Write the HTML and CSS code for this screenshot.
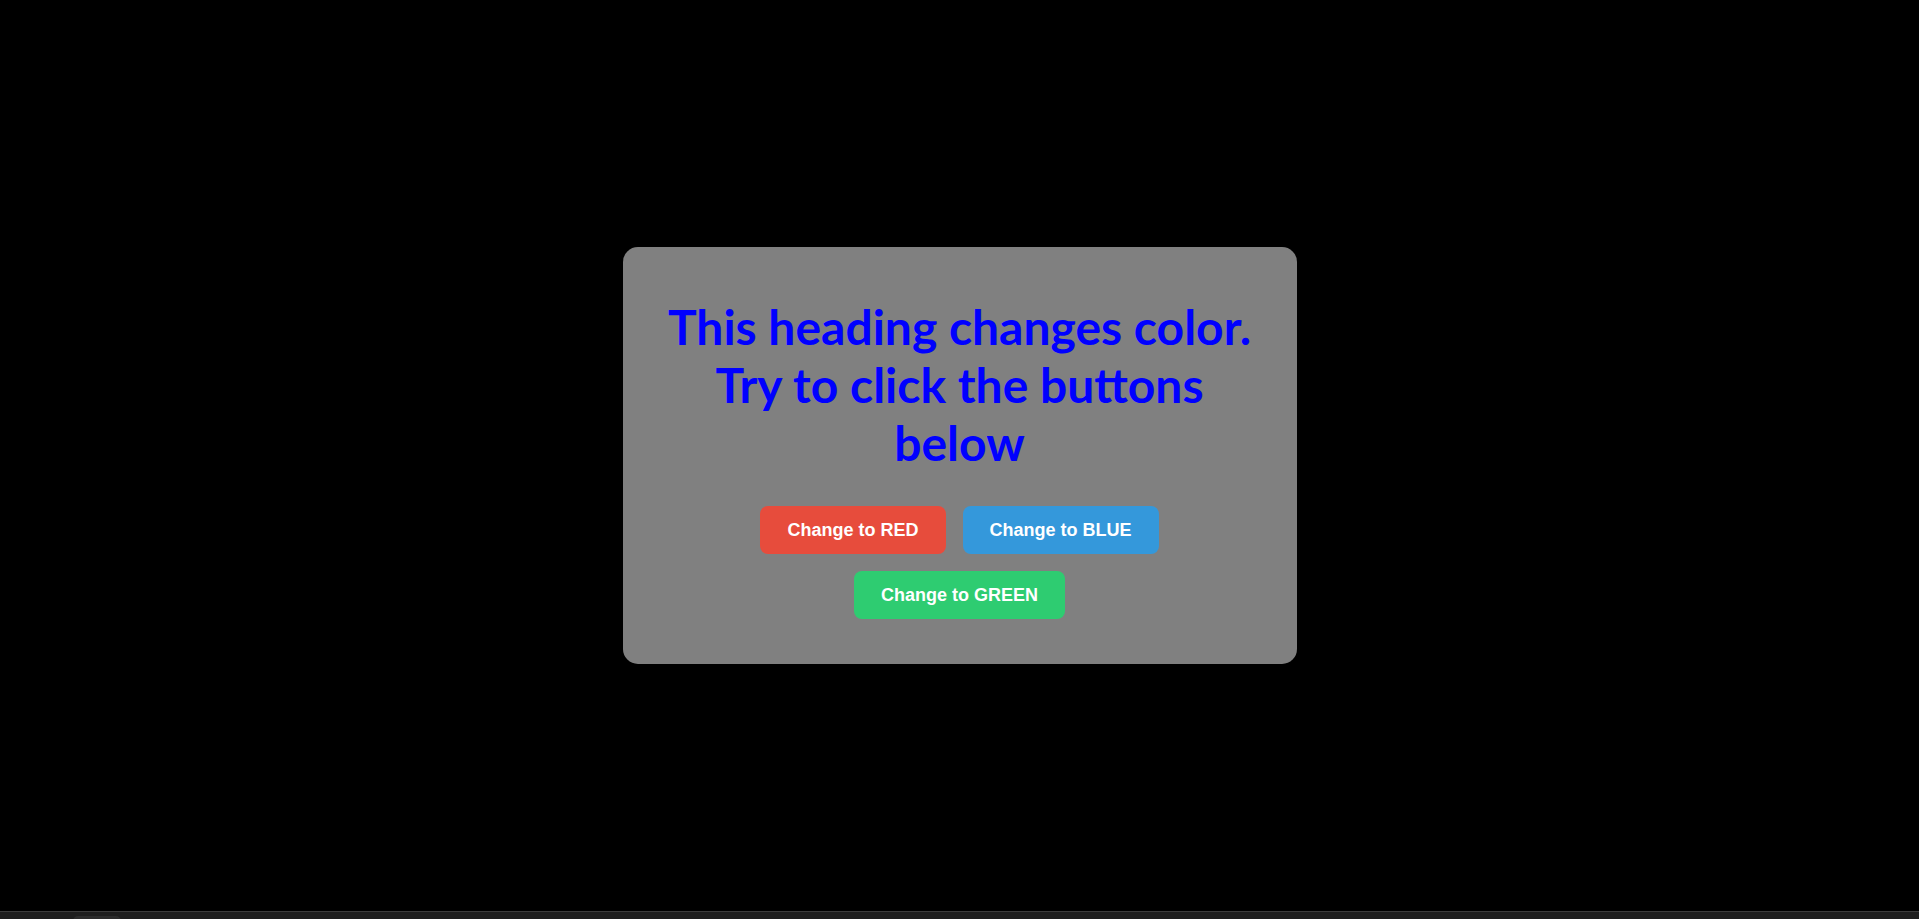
FILE: index.html
```html
<!DOCTYPE html>
<html lang="en">
<head>
<meta charset="utf-8">
<title>Change heading color</title>
<link rel="stylesheet" href="styles.css">
</head>
<body>
<main class="stage">
  <section class="card">
    <h1 class="heading">This heading changes color. Try to click the buttons below</h1>
    <div class="buttons">
      <button class="btn btn-red" type="button">Change to RED</button>
      <button class="btn btn-blue" type="button">Change to BLUE</button>
      <button class="btn btn-green" type="button">Change to GREEN</button>
    </div>
  </section>
</main>
<footer class="bar"><span class="bar-tab"></span></footer>
</body>
</html>
```
FILE: styles.css
```css
html, body {
  height: 100%;
}
body {
  margin: 0;
  background: #000;
  display: flex;
  flex-direction: column;
  overflow: hidden;
}
.stage {
  flex: 1;
  display: flex;
  align-items: center;
  justify-content: center;
}
.card {
  width: 674px;
  box-sizing: border-box;
  padding: 51px 40px 45px;
  background: #808080;
  border-radius: 15px;
  text-align: center;
}
.heading {
  margin: 0;
  font-family: Lato, "Open Sans", sans-serif;
  font-weight: 700;
  font-size: 48px;
  line-height: 58px;
  color: #0000ff;
}
.buttons {
  margin-top: 34px;
  display: flex;
  flex-wrap: wrap;
  justify-content: center;
  gap: 17px;
}
.btn {
  border: none;
  border-radius: 8px;
  padding: 13px 27px;
  font-family: "Liberation Sans", Arial, sans-serif;
  font-weight: 700;
  font-size: 18px;
  line-height: 22px;
  color: #fff;
  cursor: pointer;
}
.btn-red { background: #e74c3c; }
.btn-blue { background: #3498db; }
.btn-green { background: #2ecc71; }
.bar {
  height: 8px;
  flex: none;
  box-sizing: border-box;
  background: #1e1e1e;
  border-top: 1px solid #3c3c3c;
  position: relative;
}
.bar-tab {
  position: absolute;
  left: 73px;
  top: 4px;
  width: 48px;
  height: 10px;
  border-radius: 5px;
  background: #2c2c2c;
}
```
